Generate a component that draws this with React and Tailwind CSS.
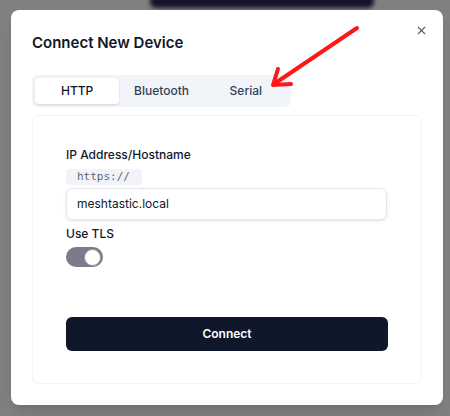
import React from "react";
import { X } from "lucide-react";

// Tabs shown in the connect dialog
const tabs = ["HTTP", "Bluetooth", "Serial"];

export default function App() {
  return (
    <div
      className="relative w-[450px] h-[416px] overflow-hidden bg-[#808080] pt-[10px] pl-[11px]"
      style={{ fontFamily: "Inter, 'Noto Sans', sans-serif" }}
    >
      {/* Page element peeking out behind the overlay */}
      <div className="absolute top-[-6px] left-[150px] w-[224px] h-[14px] rounded-md bg-[#15132a] blur-[2px]" />

      {/* Dialog */}
      <div className="relative w-[432px] h-[395px] rounded-lg bg-white px-[21px] pt-[19px] shadow-lg">
        <button className="absolute right-[15px] top-[14px] text-[#555b66]">
          <X size={13} strokeWidth={2} />
        </button>

        <h2 className="text-[15px] leading-7 font-semibold text-[#0f172a]">
          Connect New Device
        </h2>

        {/* Tabs */}
        <div className="mt-[18px] grid grid-cols-3 w-[259px] h-[32px] rounded-md bg-[#f1f5f9] p-[3px]">
          {tabs.map((tab, i) => (
            <div
              key={tab}
              className={
                i === 0
                  ? "flex items-center justify-center rounded-sm bg-white text-[12px] font-medium text-[#0f172a] shadow-sm"
                  : "flex items-center justify-center text-[12px] font-medium text-[#334155]"
              }
            >
              {tab}
            </div>
          ))}
        </div>

        {/* Form card */}
        <div className="mt-[8px] h-[269px] rounded-md border border-[#f1f5f9] px-[33px] pt-[29px]">
          <label className="block text-[12px] leading-5 font-medium text-[#0f172a]">
            IP Address/Hostname
          </label>
          <div
            className="mt-[4px] flex w-fit h-[16px] items-center rounded-sm bg-[#f1f3f6] pl-[11px] pr-[12px] text-[11px] font-medium text-[#5f667a]"
            style={{ fontFamily: "'DejaVu Sans Mono', monospace" }}
          >
            https://
          </div>
          <div className="mt-[3px] flex h-[32px] w-[321px] items-center rounded-md border border-[#e5e7eb] px-[10px] text-[12px] text-[#0f172a] shadow-sm">
            meshtastic.local
          </div>
          <div className="mt-[4px] text-[12px] leading-5 font-medium text-[#0f172a]">
            Use TLS
          </div>
          {/* Switch, checked */}
          <div className="mt-[3px] flex h-[20px] w-[37px] items-center justify-end rounded-full bg-[#7a7a8a] p-[2px]">
            <div className="h-[17px] w-[17px] rounded-full border border-[#9a9aa8] bg-white" />
          </div>
          <button className="mt-[50px] flex h-[34px] w-[322px] items-center justify-center rounded-md bg-[#0f172a] text-[12px] font-semibold text-white">
            Connect
          </button>
        </div>
      </div>

      {/* Red annotation arrow */}
      <svg
        className="absolute left-0 top-0"
        width="450"
        height="416"
        viewBox="0 0 450 416"
      >
        <g stroke="#ff1616" strokeWidth="4" strokeLinecap="round" strokeLinejoin="round" fill="none">
          <line x1="357" y1="28" x2="274" y2="84" />
          <polyline points="278,69 273,85 291,84" />
        </g>
      </svg>
    </div>
  );
}
